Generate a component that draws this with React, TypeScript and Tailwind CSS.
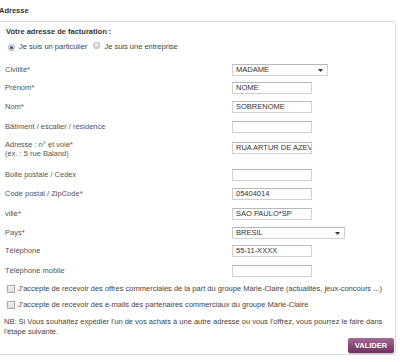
import React from "react";

const Input = ({ value = "", w = "w-[80px]" }: { value?: string; w?: string }) => (
  <div
    className={`${w} h-[12px] border border-[#d0d0d0] border-t-[#b8b8b8] bg-white pl-[3px] leading-[10px] text-[#333] whitespace-nowrap overflow-hidden`}
  >
    {value}
  </div>
);

const Select = ({ value, w }: { value: string; w: string }) => (
  <div
    className={`${w} h-[12px] border border-[#d0d0d0] border-t-[#b8b8b8] bg-white pl-[3px] pr-[4px] leading-[10px] text-[#333] flex items-center justify-between`}
  >
    <span>{value}</span>
    <svg width="5" height="3" viewBox="0 0 5 3">
      <path d="M0 0h5L2.5 3z" fill="#333" />
    </svg>
  </div>
);

const Radio = ({ checked }: { checked?: boolean }) => (
  <span className="inline-flex w-[7px] h-[7px] rounded-full border border-[#a9a9a9] bg-gradient-to-b from-[#f4f4f4] to-[#d8d8d8] items-center justify-center">
    {checked && <span className="w-[3px] h-[3px] rounded-full bg-[#2a4f9c]" />}
  </span>
);

const Checkbox = () => (
  <span className="inline-block w-[8px] h-[8px] border border-[#a9a9a9] bg-gradient-to-b from-[#f2f2f2] to-[#d9d9d9]" />
);

const Row = ({
  label,
  children,
  mt,
}: {
  label: React.ReactNode;
  children: React.ReactNode;
  mt: string;
}) => (
  <div className={`flex items-start ${mt}`}>
    <div className="w-[232px] pl-[5px] leading-[12px] text-[#555]">{label}</div>
    {children}
  </div>
);

export default function App() {
  return (
    <div
      className="w-[400px] h-[362px] bg-white text-[7.5px] text-[#555] overflow-hidden"
      style={{ fontFamily: '"Liberation Sans", Arial, sans-serif' }}
    >
      <div className="h-[21px] flex items-center font-bold text-[#333] -ml-[1px]">Adresse</div>
      <div className="w-[396px] h-[334px] border-t border-r border-b border-[#dcdcdc] rounded-tr-[3px] rounded-br-[3px] flex flex-col">
        <div className="mt-[5px] pl-[6px] leading-[10px] font-bold text-[#333]">
          Votre adresse de facturation :
        </div>
        <div className="mt-[5px] pl-[8px] h-[10px] flex items-center gap-[4px] text-[#444]">
          <Radio checked />
          <span>Je suis un particulier</span>
          <span className="ml-[2px]">
            <Radio />
          </span>
          <span>Je suis une entreprise</span>
        </div>

        <Row label="Civilité*" mt="mt-[12px]">
          <Select value="MADAME" w="w-[96px]" />
        </Row>
        <Row label="Prénom*" mt="mt-[6px]">
          <Input value="NOME" />
        </Row>
        <Row label="Nom*" mt="mt-[7px]">
          <Input value="SOBRENOME" />
        </Row>
        <Row label="Bâtiment / escalier / résidence" mt="mt-[8px]">
          <Input />
        </Row>
        <Row
          label={
            <div className="leading-[9px] -mt-[2px]">
              Adresse : n° et voie*
              <br />
              (ex. : 5 rue Baland)
            </div>
          }
          mt="mt-[9px]"
        >
          <Input value="RUA ARTUR DE AZEV" />
        </Row>
        <Row label="Boite postale / Cedex" mt="mt-[11px]">
          <Input />
        </Row>
        <Row label="Code postal / ZipCode*" mt="mt-[7px]">
          <Input value="05404014" />
        </Row>
        <Row label="ville*" mt="mt-[8px]">
          <Input value="SAO PAULO*SP" />
        </Row>
        <Row label="Pays*" mt="mt-[7px]">
          <Select value="BRESIL" w="w-[113px]" />
        </Row>
        <Row label="Téléphone" mt="mt-[6px]">
          <Input value="55-11-XXXX" />
        </Row>
        <Row label="Téléphone mobile" mt="mt-[8px]">
          <Input />
        </Row>

        <div className="mt-[7px] pl-[7px] h-[10px] flex items-center gap-[3px] text-[#444]">
          <Checkbox />
          <span>
            J'accepte de recevoir des offres commerciales de la part du groupe Marie-Claire (actualités, jeux-concours ...)
          </span>
        </div>
        <div className="mt-[6px] pl-[7px] h-[10px] flex items-center gap-[3px] text-[#444]">
          <Checkbox />
          <span>J'accepte de recevoir des e-mails des partenaires commerciaux du groupe Marie-Claire</span>
        </div>
        <div className="mt-[7px] pl-[4px] pr-[10px] leading-[10px] text-[#444]">
          NB: Si Vous souhaitez expédier l'un de vos achats à une autre adresse ou vous l'offrez, vous pourrez le faire dans l'étape suivante.
        </div>
        <div className="mt-[1px] flex justify-end pr-[1px]">
          <button className="w-[46px] h-[15px] rounded-[2px] bg-gradient-to-b from-[#a56a96] to-[#6d3060] text-white font-bold text-[7.5px] leading-[15px] shadow-[0_1px_1px_rgba(0,0,0,0.25)]">
            VALIDER
          </button>
        </div>
      </div>
    </div>
  );
}
